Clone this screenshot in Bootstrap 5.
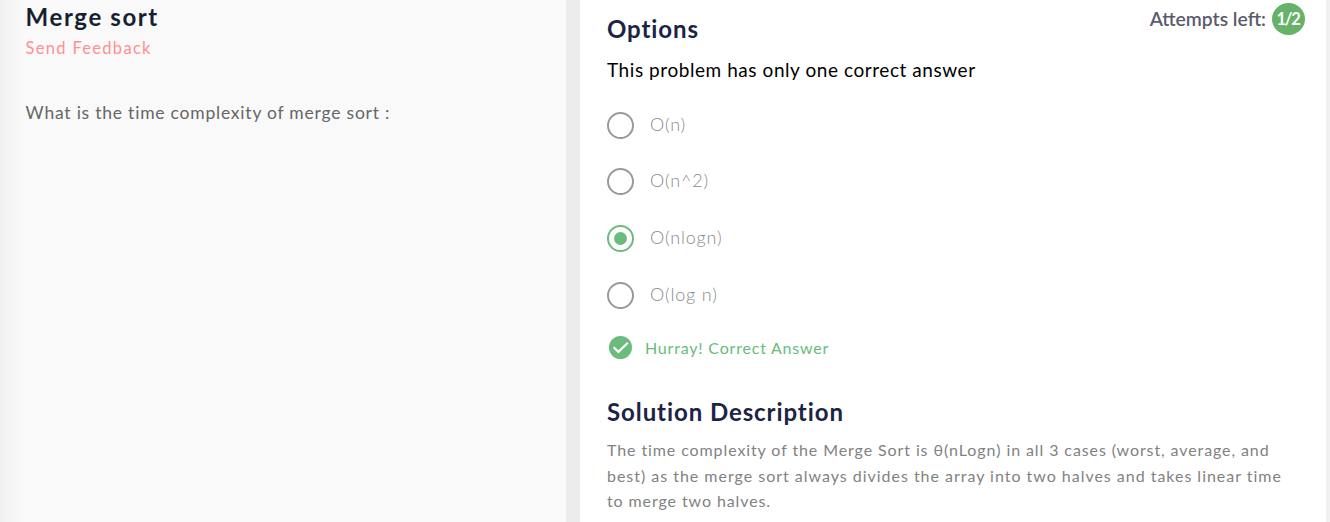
<!DOCTYPE html>
<html lang="en">
<head>
<meta charset="utf-8">
<meta name="viewport" content="width=device-width, initial-scale=1">
<title>Merge sort</title>
<link href="https://cdn.jsdelivr.net/npm/bootstrap@5.3.0/dist/css/bootstrap.min.css" rel="stylesheet">
<style>
body{font-family:Lato,"Noto Sans",sans-serif;background:#f0f0f0}
.problem{width:566px;padding:2px 25px 0 25.6px;background:linear-gradient(90deg,#efefef,#f5f5f5 10px,#f9f9f9 24px)}
.divider{width:14px;background:#ececec}
.answer{width:746px;padding:0 21px 0 27px;background:#fff}
h1,h2{font-size:24px;font-weight:700;line-height:30px;letter-spacing:.92px}
h1{color:#171f33;letter-spacing:1.6px}
h2{color:#1b2444}
.feedback{font-size:16.5px;line-height:24px;letter-spacing:1.3px;color:#ff9090;margin-top:4px}
.question{font-size:17.5px;line-height:28px;letter-spacing:.78px;color:#666;margin-top:39px}
.answer-head{height:43px}
.answer-head h2{margin:14px 0 0}
.hint{font-size:19px;line-height:28px;letter-spacing:.56px;color:#000;margin:13px 0 27.8px}
.attempts{height:32px;margin-top:3px;gap:6px;font-size:19.3px;font-weight:600;color:#5b5c6b}
.count{width:33px;height:32px;background:#66b268;font-size:16.5px;letter-spacing:-1.2px;padding-right:1px}
.choices{gap:29.6px}
.choice{height:27px;font-size:18px;line-height:25.4px;letter-spacing:.8px;color:#8a8a8a;font-weight:300}
.ring{width:27px;height:27px;border:2px solid #999}
.chosen .ring{border-color:#6abb7c}
.chosen .ring::after{content:"";width:13px;height:13px;border-radius:50%;background:#6abb7c}
.result{height:24px;margin-top:27px;padding-left:2px;gap:13px;font-size:16px;line-height:23px;letter-spacing:.8px;color:#6abb7c}
.answer .solution-title{margin:37px 0 10.4px}
.solution{font-size:16px;line-height:25.6px;letter-spacing:.9px;color:#828282}
.solution .wide{letter-spacing:.98px}
</style>
</head>
<body class="vh-100 overflow-hidden">
<main class="d-flex h-100">
  <section class="problem flex-shrink-0">
    <h1 class="mb-0">Merge sort</h1>
    <a href="#" class="feedback d-block text-decoration-none">Send Feedback</a>
    <p class="question mb-0">What is the time complexity of merge sort :</p>
  </section>
  <div class="divider flex-shrink-0"></div>
  <section class="answer flex-shrink-0">
    <header class="answer-head d-flex justify-content-between align-items-start">
      <h2>Options</h2>
      <div class="attempts d-flex align-items-center">
        <span>Attempts left:</span>
        <span class="count rounded-circle text-white fw-bold d-flex align-items-center justify-content-center">1/2</span>
      </div>
    </header>
    <p class="hint">This problem has only one correct answer</p>
    <div class="choices d-flex flex-column">
      <div class="choice d-flex gap-3"><span class="ring rounded-circle"></span><span>O(n)</span></div>
      <div class="choice d-flex gap-3"><span class="ring rounded-circle"></span><span>O(n^2)</span></div>
      <div class="choice chosen d-flex gap-3"><span class="ring rounded-circle d-flex align-items-center justify-content-center"></span><span>O(nlogn)</span></div>
      <div class="choice d-flex gap-3"><span class="ring rounded-circle"></span><span>O(log n)</span></div>
    </div>
    <div class="result d-flex align-items-center">
      <svg width="23" height="23" viewBox="0 0 23 23" aria-hidden="true"><circle cx="11.5" cy="11.5" r="11.5" fill="#6abb7c"/><path d="M4.6 11.3l4.8 4.6L18.9 6.7" fill="none" stroke="#fff" stroke-width="2.2"/></svg>
      <span>Hurray! Correct Answer</span>
    </div>
    <h2 class="solution-title">Solution Description</h2>
    <p class="solution text-nowrap mb-0">The time complexity of the Merge Sort is θ(nLogn) in all 3 cases (worst, average, and<br><span class="wide">best) as the merge sort always divides the array into two halves and takes linear time</span><br>to merge two halves.</p>
  </section>
</main>
</body>
</html>
